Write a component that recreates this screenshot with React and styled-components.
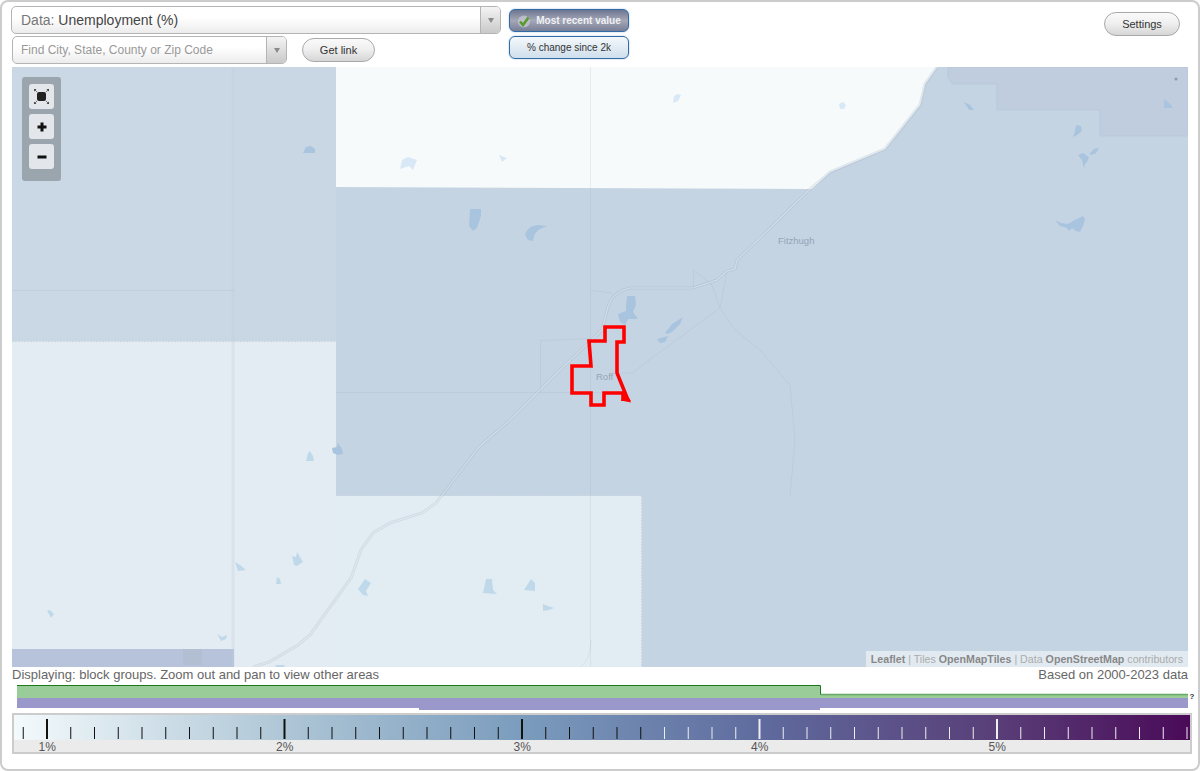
import React from 'react';
import styled, { createGlobalStyle } from 'styled-components';

const GlobalStyle = createGlobalStyle`
    html, body {
        margin: 0;
        padding: 0;
        background: #fff;
    }
    body {
        font-family: "Liberation Sans", Arial, sans-serif;
    }
`;

const Frame = styled.div`
    box-sizing: border-box;
    width: 1200px;
    height: 771px;
    padding: 0 10px;
    border: 2px solid #ccc;
    border-radius: 8px;
    background: #fff;
    overflow: hidden;
`;

const Toolbar = styled.div`
    height: 65px;
    padding-top: 4px;
    box-sizing: border-box;
    display: flex;
    align-items: flex-start;
`;

const SelectColumn = styled.div`
    width: 490px;
    margin-left: -1px;
    display: flex;
    flex-direction: column;
    gap: 2px;
`;

const FindRow = styled.div`
    display: flex;
    align-items: center;
    margin-left: 1px;
    gap: 15px;
`;

const SelectBox = styled.div`
    box-sizing: border-box;
    width: ${props => props.$width}px;
    height: 28px;
    display: flex;
    align-items: stretch;
    border: 1px solid #b4b4b4;
    border-radius: 5px;
    background: linear-gradient(#fff 40%, #ececec);
    overflow: hidden;
`;

const SelectLabel = styled.div`
    flex: 1;
    padding-left: ${props => props.$indent}px;
    line-height: 27px;
    font-size: ${props => props.$size}px;
    color: ${props => props.$color};
    white-space: nowrap;
`;

const DataName = styled.span`
    color: #444;
`;

const SelectArrow = styled.div`
    width: 19px;
    display: flex;
    align-items: center;
    justify-content: center;
    border-left: 1px solid #b4b4b4;
    background: linear-gradient(#f4f4f4, #c9c9c9);

    &::after {
        content: '';
        border-left: 3.5px solid transparent;
        border-right: 3.5px solid transparent;
        border-top: 5px solid #8a8a8a;
    }
`;

const PillButton = styled.button`
    box-sizing: border-box;
    width: ${props => props.$width}px;
    height: 24px;
    padding: 0;
    border: 1px solid #a9a9a9;
    border-radius: 12px;
    background: linear-gradient(#fafafa, #f0f0f0 45%, #d6d6d6);
    font-family: inherit;
    font-size: 11px;
    color: #333;
`;

const SettingsButton = styled(PillButton)`
    margin: 6px 8px 0 auto;
`;

const ToggleColumn = styled.div`
    margin: 3px 0 0 8px;
    display: flex;
    flex-direction: column;
    gap: 4px;
`;

const Toggle = styled.div`
    box-sizing: border-box;
    width: 120px;
    height: 23px;
    display: flex;
    align-items: center;
    justify-content: center;
    gap: 5px;
    border: 1px solid #2f6ba8;
    border-radius: 6px;
    box-shadow: 0 0 2px #a9bdd2;
    font-size: 10px;
    font-weight: ${props => (props.$active ? 'bold' : 'normal')};
    color: ${props => (props.$active ? '#eef0f4' : '#333')};
    background: ${props => (props.$active
        ? 'linear-gradient(#6d7590, #a4a7b6 50%, #777e96)'
        : 'linear-gradient(#f4f8fb, #cfdfec)')};
`;

const MapArea = styled.div`
    position: relative;
    width: 1176px;
    height: 600px;
    background: #c5d4e3;
    overflow: hidden;
`;

const MapSvg = styled.svg`
    display: block;
`;

const MapControls = styled.div`
    position: absolute;
    left: 10px;
    top: 10px;
    box-sizing: border-box;
    width: 39px;
    height: 104px;
    padding: 7px;
    display: flex;
    flex-direction: column;
    gap: 5px;
    background: #9aa5ae;
    border-radius: 3px;
`;

const MapButton = styled.div`
    width: 25px;
    height: 25px;
    display: flex;
    align-items: center;
    justify-content: center;
    background: #e3e6ea;
    border-radius: 3px;
`;

const Attribution = styled.div`
    position: absolute;
    right: 0;
    bottom: 0;
    height: 16px;
    padding: 0 5px;
    line-height: 16px;
    font-size: 10.67px;
    color: #aaa;
    background: rgba(255, 255, 255, 0.5);
    white-space: nowrap;
`;

const AttributionStrong = styled.b`
    color: #888;
`;

const StatusRow = styled.div`
    height: 17px;
    display: flex;
    justify-content: space-between;
    font-size: 13px;
    line-height: 16px;
    color: #666;
`;

const Histogram = styled.svg`
    display: block;
    width: 1186px;
    height: 28px;
`;

const ScaleBar = styled.div`
    box-sizing: border-box;
    width: 1180px;
    height: 41px;
    margin-top: 1px;
    border: 2px solid #ccc;
    background: #ebebeb;
`;

const Ramp = styled.svg`
    display: block;
    width: 1176px;
    height: 25px;
    background: linear-gradient(90deg,
        #f4fafc 0%,
        #aec6d6 23%,
        #7b9cbd 43.2%,
        #5f6b9e 63.4%,
        #593e78 83.6%,
        #4a0a58 100%);
`;

const ScaleLabels = styled.div`
    display: flex;
    margin-left: -85.5px;
`;

const ScaleLabel = styled.div`
    flex: 0 0 237.5px;
    text-align: center;
    font-size: 12px;
    line-height: 14px;
    color: #555;
`;

// map shapes in page coordinates
const LAKES_DARK = [
    'M470 209L481 209L481 216L479 222L477 228L473 231L469 226Z',
    'M525 235Q527 228 533 226L538 225L547 226L540 229Q534 232 533 241L528 240Z',
    'M964 102L970 105L974 110L969 110Z',
    'M1076 125L1081 126L1082 131L1077 135L1073 137L1075 131Z',
    'M1078 155L1083 153L1089 157L1087 162L1085 164L1084 169L1082 160Z',
    'M1089 154L1094 149L1099 148L1096 153L1092 155Z',
    'M1055 220L1061 223L1068 224L1075 220L1083 216L1085 219L1083 226L1080 232L1076 231L1072 228L1069 231L1067 228L1060 226Z',
    'M1164 99L1168 102L1172 106L1172 108L1164 108Z',
    'M627 296L635 296L636 305L633 312L638 319L628 319L625 325L620 322L618 314L626 311L626 305Z',
    'M665 333L672 324L683 317L680 324L672 332L667 334Z',
    'M657 339L668 336L665 342L660 343Z',
    'M303 153L306 147L311 146L315 149L315 153Z',
    'M332 448L337 447L338 443L342 449L343 454L338 455L333 453Z',
];

const LAKES_LIGHT = [
    'M673 103L674 96L678 94L681 95L678 101Z',
    'M400 169L402 160L408 157L417 160L413 170L409 166Z',
    'M499 155L507 158L502 162Z',
    'M839 104L843 102L846 105L844 109L840 109Z',
];

const LAKES_PALE = [
    'M306 461L308 453L310 451L313 456L314 461Z',
    'M292 556L296 557L297 552L303 562L297 566L294 565Z',
    'M235 562L240 565L246 570L238 571Z',
    'M276 584L277 577L280 579L281 584Z',
    'M358 589L365 579L371 583L366 591L368 596L363 595Z',
    'M483 593L486 579L492 579L493 590L497 594Z',
    'M524 590L531 579L535 583L535 591Z',
    'M543 604L548 606L554 608L549 610L543 611Z',
    'M47 611L50 610L54 614L51 618L49 614Z',
    'M217 634L222 637L227 635L226 639L221 641Z',
    'M275 665L285 665L284 667L276 667Z',
];

const ROAD = 'M253 667L269 662L298 645L310 635L351 578L361 550L373 533L390 523L422 513L436 503L479 447L510 420L560 370L602 330L608 307Q612 292 630 288L693 288L717 280L727 271L735 269L737 260L760 238L810 189L830 172L885 149L920 105L925 84L937 67';

const BLOCK_LINES = [
    'M590.5 67L590.5 667',
    'M336 392.5L620 392.5',
    'M540.5 392L540.5 340.5L590 338.5',
    'M591 290.5L612 293',
    'M12 290.5L234 290.5',
    'M617 373L632 373L660 352L720 308L727 272',
    'M693.5 288L693.5 270L712 285L720 308L735 330L760 350L790 385L795 440L790 496',
    'M591 640Q591 660 580 667',
];

const ROFF = 'M605 327L624 327L624 342L617 342L617 373L628 400L623 399L623 393L604 393L604 405L591 405L591 393L572 393L572 366L591 366L589 341L605 341Z';

const TICKS = Array.from({ length: 50 }, (_, i) => i - 1);

function CheckIcon() {
    return (
        <svg width="14" height="14" viewBox="0 0 14 14">
            <circle cx="7" cy="7.5" r="6" fill="#c9ccd4" opacity="0.7" />
            <path d="M3 7.5L6 11L11.5 3.5" fill="none" stroke="#5a9a2c" strokeWidth="2.6" />
        </svg>
    );
}

function FitIcon() {
    return (
        <svg width="15" height="15" viewBox="0 0 15 15">
            <rect x="3" y="3" width="9" height="9" rx="2" fill="#222" />
            <path d="M0 0H2.5L0 2.5ZM15 0H12.5L15 2.5ZM0 15H2.5L0 12.5ZM15 15H12.5L15 12.5Z" fill="#444" />
            <path d="M1 1L3 3M14 1L12 3M1 14L3 12M14 14L12 12" stroke="#555" strokeWidth="0.8" />
        </svg>
    );
}

function PlusIcon() {
    return (
        <svg width="10" height="10" viewBox="0 0 10 10">
            <path d="M3.5 0.5H6.5V3.5H9.5V6.5H6.5V9.5H3.5V6.5H0.5V3.5H3.5Z" fill="#111" />
        </svg>
    );
}

function MinusIcon() {
    return (
        <svg width="10" height="10" viewBox="0 0 10 10">
            <rect x="0.5" y="3.5" width="9" height="3" fill="#111" />
        </svg>
    );
}

function MapDrawing() {
    return (
        <MapSvg width="1176" height="600" viewBox="12 67 1176 600">
            <rect x="12" y="67" width="1176" height="600" fill="#c5d4e3" />
            <rect x="12" y="67" width="222" height="274" fill="#cad7e5" />
            <rect x="234" y="67" width="102" height="274" fill="#c9d6e4" />
            <path d="M948 67L948 77L952 84L997 84L997 110L1100 110L1100 136L1188 136L1188 67Z" fill="#bfcdde" stroke="#b9c9da" />
            <path d="M336 67L937 67L925 84L920 105L885 149L830 172L812 189L336 187Z" fill="#f6fafb" />
            <rect x="12" y="341" width="222" height="308" fill="#e3ecf2" />
            <rect x="234" y="341" width="102" height="326" fill="#e3ecf2" />
            <rect x="336" y="496" width="306" height="171" fill="#e2edf3" />
            <rect x="12" y="649" width="222" height="18" fill="#b6c3db" />
            <rect x="183" y="649" width="19" height="16" fill="#b2bed2" />

            <path d="M12 341.5L336 341.5M335.5 341L335.5 67M336 495.5L642 495.5M641.5 496L641.5 667" stroke="#ccd6e0" strokeDasharray="2 1" fill="none" />
            <path d="M233 67L233 667" stroke="#bdccd9" strokeWidth="3" opacity="0.3" />

            {BLOCK_LINES.map(d => (
                <path key={d} d={d} fill="none" stroke="#8fa3b8" strokeOpacity="0.16" />
            ))}

            <path d={ROAD} fill="none" stroke="#8b9db0" strokeOpacity="0.2" strokeWidth="3" />
            <path d={ROAD} fill="none" stroke="#eef3f7" strokeOpacity="0.5" strokeWidth="1.2" />

            {LAKES_DARK.map(d => <path key={d} d={d} fill="#a9c4de" />)}
            {LAKES_LIGHT.map(d => <path key={d} d={d} fill="#d8e8f6" />)}
            {LAKES_PALE.map(d => <path key={d} d={d} fill="#bfd9ea" />)}
            <circle cx="1176" cy="79" r="1.5" fill="#8b99a8" />

            <text x="778" y="244" fontSize="9.5" fill="#93a5b8" fontFamily="Liberation Sans, sans-serif">Fitzhugh</text>
            <text x="596" y="380" fontSize="9.5" fill="#93a5b8" fontFamily="Liberation Sans, sans-serif">Roff</text>

            <path d={ROFF} fill="none" stroke="#ff0000" strokeWidth="3.6" strokeLinejoin="miter" />
            <path d="M621 401L625 392L631 401Z" fill="#ff0000" />
        </MapSvg>
    );
}

export default function App() {
    return (
        <>
            <GlobalStyle />
            <Frame>
                <Toolbar>
                    <SelectColumn>
                        <SelectBox $width={490}>
                            <SelectLabel $indent={9} $size={14} $color="#777">
                                Data: <DataName>Unemployment (%)</DataName>
                            </SelectLabel>
                            <SelectArrow />
                        </SelectBox>
                        <FindRow>
                            <SelectBox $width={275}>
                                <SelectLabel $indent={8} $size={12} $color="#999">
                                    Find City, State, County or Zip Code
                                </SelectLabel>
                                <SelectArrow />
                            </SelectBox>
                            <PillButton $width={73}>Get link</PillButton>
                        </FindRow>
                    </SelectColumn>
                    <ToggleColumn>
                        <Toggle $active>
                            <CheckIcon />
                            Most recent value
                        </Toggle>
                        <Toggle>% change since 2k</Toggle>
                    </ToggleColumn>
                    <SettingsButton $width={76}>Settings</SettingsButton>
                </Toolbar>

                <MapArea>
                    <MapDrawing />
                    <MapControls>
                        <MapButton><FitIcon /></MapButton>
                        <MapButton><PlusIcon /></MapButton>
                        <MapButton><MinusIcon /></MapButton>
                    </MapControls>
                    <Attribution>
                        <AttributionStrong>Leaflet</AttributionStrong> | Tiles <AttributionStrong>OpenMapTiles</AttributionStrong> | Data <AttributionStrong>OpenStreetMap</AttributionStrong> contributors
                    </Attribution>
                </MapArea>

                <StatusRow>
                    <span>Displaying: block groups. Zoom out and pan to view other areas</span>
                    <span>Based on 2000-2023 data</span>
                </StatusRow>

                <Histogram viewBox="12 684 1186 28">
                    <rect x="17" y="698" width="1171" height="10" fill="#9a98cb" />
                    <rect x="419" y="708" width="401" height="2" fill="#9a98cb" />
                    <rect x="17" y="686" width="803" height="12" fill="#99cc99" />
                    <rect x="820" y="695" width="368" height="3" fill="#99cc99" />
                    <path d="M17 685.5L820.5 685.5L820.5 694.5L1188 694.5" fill="none" stroke="#1a7a1a" />
                    <path d="M821 694.5L1188 694.5" fill="none" stroke="#66aa66" strokeWidth="1.5" />
                    <text x="1189.5" y="699" fontSize="8" fontWeight="bold" fill="#333" fontFamily="Liberation Sans, sans-serif">?</text>
                </Histogram>

                <ScaleBar>
                    <Ramp viewBox="14 715 1176 25">
                        {TICKS.map(i => {
                            const x = 47 + i * 23.75;
                            const major = i % 10 === 0;
                            return (
                                <rect
                                    key={i}
                                    x={x - (major ? 1 : 0.5)}
                                    y={major ? 719 : 727}
                                    width={major ? 2 : 1}
                                    height={major ? 20 : 12}
                                    fill={i >= 26 ? '#eee' : '#111'}
                                />
                            );
                        })}
                    </Ramp>
                    <ScaleLabels>
                        {['1%', '2%', '3%', '4%', '5%'].map(label => (
                            <ScaleLabel key={label}>{label}</ScaleLabel>
                        ))}
                    </ScaleLabels>
                </ScaleBar>
            </Frame>
        </>
    );
}
